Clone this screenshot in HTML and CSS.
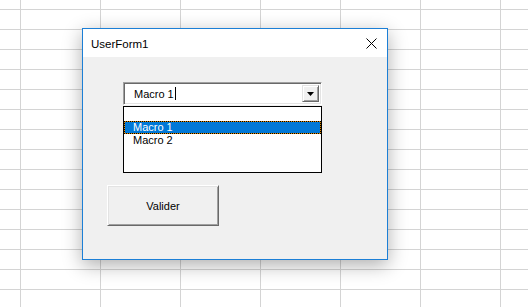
FILE: index.html
```html
<!DOCTYPE html>
<html>
<head>
<meta charset="utf-8">
<link rel="stylesheet" href="styles.css">
</head>
<body>
<div class="dialog">
  <div class="titlebar">
    <span class="title">UserForm1</span>
    <svg class="close" width="11" height="11" viewBox="0 0 11 11"><path d="M0.5 0.5 L10.5 10.5 M10.5 0.5 L0.5 10.5" stroke="#000" stroke-width="1" fill="none"/></svg>
  </div>
  <div class="client">
    <div class="combo">
      <div class="combo-field"><span>Macro 1</span><span class="caret"></span></div>
      <div class="drop-btn"><svg width="7" height="4" viewBox="0 0 7 4"><path d="M0 0 H7 L3.5 4 Z" fill="#000"/></svg></div>
    </div>
    <div class="list">
      <div class="row empty"></div>
      <div class="row sel">Macro 1</div>
      <div class="row">Macro 2</div>
    </div>
    <button class="btn">Valider</button>
  </div>
</div>
</body>
</html>
```

FILE: styles.css
```css
html, body {
  height: 100%;
}
body {
  margin: 0;
  overflow: hidden;
  background-color: #fff;
  background-image:
    linear-gradient(to right, #d4d4d4 1px, transparent 1px),
    linear-gradient(to bottom, #d4d4d4 1px, transparent 1px);
  background-size: 80px 100%, 100% 20px;
  background-position: 20px 0, 0 9px;
  font-family: "Liberation Sans", Arial, sans-serif;
  padding: 28px 0 0 82px;
  box-sizing: border-box;
}
.dialog {
  width: 306px;
  height: 232px;
  box-sizing: border-box;
  border: 1px solid #1c7fd6;
  background: #f0f0f0;
  box-shadow: 0 5px 18px rgba(0, 0, 0, 0.32);
  display: flex;
  flex-direction: column;
}
.titlebar {
  height: 28px;
  background: #fff;
  display: flex;
  align-items: center;
  justify-content: space-between;
  padding: 0 10px 0 8px;
  flex: none;
}
.title {
  font-size: 11.5px;
  color: #000;
  margin-top: 1px;
}
.close {
  display: block;
}
.client {
  flex: 1;
  padding: 25px 0 0 24px;
  display: flex;
  flex-direction: column;
  align-items: flex-start;
}
.combo {
  margin-left: 16px;
  width: 199px;
  height: 23px;
  box-sizing: border-box;
  border-top: 1px solid #a0a0a0;
  border-left: 1px solid #a0a0a0;
  border-right: 1px solid #fff;
  border-bottom: 1px solid #fff;
  box-shadow: inset 1px 1px 0 #696969, inset -1px -1px 0 #e3e3e3;
  background: #fff;
  display: flex;
  align-items: center;
  padding: 0 2px 0 10px;
}
.combo-field {
  flex: 1;
  font-size: 11px;
  color: #000;
  display: flex;
  align-items: center;
}
.caret {
  width: 1px;
  height: 13px;
  background: #000;
  margin-left: 1px;
}
.drop-btn {
  width: 17px;
  height: 17px;
  box-sizing: border-box;
  background: #f0f0f0;
  border-top: 1px solid #e3e3e3;
  border-left: 1px solid #e3e3e3;
  border-right: 1px solid #696969;
  border-bottom: 1px solid #696969;
  box-shadow: inset 1px 1px 0 #fff, inset -1px -1px 0 #a0a0a0;
  display: flex;
  align-items: center;
  justify-content: center;
}
.drop-btn svg {
  display: block;
}
.list {
  margin: 1px 0 0 16px;
  width: 199px;
  height: 67px;
  box-sizing: border-box;
  border: 1px solid #000;
  background: #fff;
}
.row {
  height: 13px;
  box-sizing: border-box;
  border: 1px solid transparent;
  padding-left: 8px;
  font-size: 11px;
  line-height: 11px;
  color: #000;
}
.row.empty {
  height: 14px;
}
.row.sel {
  color: #fff;
  border: 1px dotted #000;
  background: linear-gradient(#0078d7, #0078d7) padding-box, #e08a00 border-box;
}
.btn {
  margin-top: 12px;
  width: 112px;
  height: 41px;
  box-sizing: border-box;
  background: #f0f0f0;
  border-top: 1px solid #fff;
  border-left: 1px solid #fff;
  border-right: 1px solid #696969;
  border-bottom: 1px solid #696969;
  box-shadow: inset 1px 1px 0 #e3e3e3, inset -1px -1px 0 #a0a0a0;
  font-family: "Liberation Sans", Arial, sans-serif;
  font-size: 11px;
  color: #000;
  padding: 0;
}
```
